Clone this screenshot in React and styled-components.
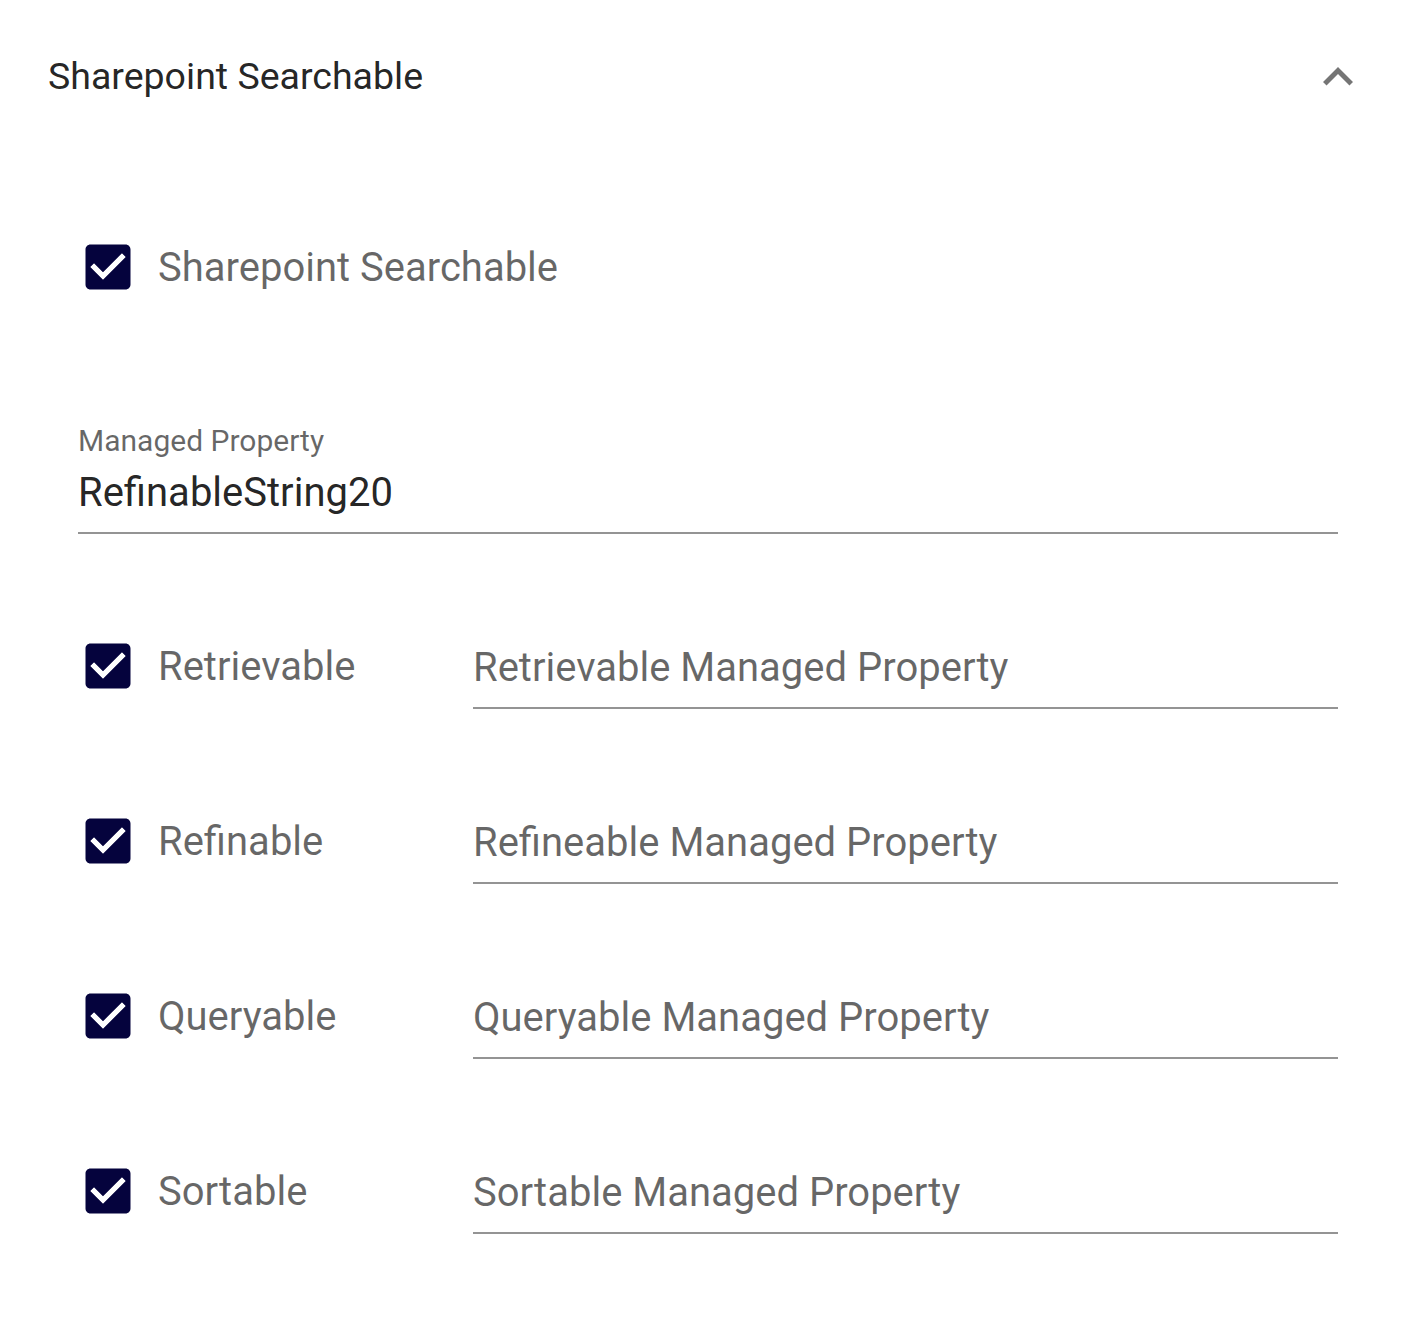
import React from "react";
import styled, { createGlobalStyle } from "styled-components";

const GlobalStyle = createGlobalStyle`
  html, body { margin: 0; padding: 0; background: #ffffff; }
  body { font-family: Roboto, "Noto Sans", "Liberation Sans", sans-serif; }
`;

const Page = styled.div`
  width: 1415px;
  min-height: 1319px;
  box-sizing: border-box;
  background: #fff;
`;

const Header = styled.div`
  height: 152px;
  display: flex;
  align-items: center;
  justify-content: space-between;
  padding: 0 47px 0 48px;
  box-sizing: border-box;
`;

const Title = styled.div`
  font-size: 37.5px;
  line-height: 44px;
  color: rgba(0, 0, 0, 0.87);
  font-weight: 400;
`;

const ChevronButton = styled.div`
  width: 60px;
  height: 60px;
  margin-top: 2px;
  display: flex;
  align-items: center;
  justify-content: center;
  color: rgba(0, 0, 0, 0.54);
  svg { display: block; }
`;

const Details = styled.div`
  display: flex;
  flex-direction: column;
  padding: 84.5px 77px 85px 77.5px;
`;

const CheckGroup = styled.label`
  display: flex;
  align-items: center;
  height: 60px;
  gap: 20.5px;
  cursor: pointer;
`;

const CheckIcon = styled.svg`
  width: 60px;
  height: 60px;
  flex: none;
  color: #05033d;
`;

const CheckLabel = styled.span`
  font-size: 40px;
  line-height: 47px;
  margin-top: 1.5px;
  color: rgba(0, 0, 0, 0.6);
  white-space: nowrap;
`;

const Field = styled.div`
  display: flex;
  flex-direction: column;
  margin-top: ${(p) => p.$top || 0}px;
  padding-bottom: 16px;
  border-bottom: 2px solid #949494;
`;

const FieldLabel = styled.div`
  font-size: 30px;
  line-height: 35px;
  color: rgba(0, 0, 0, 0.6);
  margin-bottom: 10.6px;
`;

const FieldValue = styled.div`
  font-size: 40px;
  line-height: 47px;
  color: ${(p) => (p.$placeholder ? "rgba(0, 0, 0, 0.6)" : "rgba(0, 0, 0, 0.87)")};
  white-space: nowrap;
`;

const ManagedField = styled(Field)`
  margin-top: 126.5px;
  margin-bottom: 102.5px;
  margin-left: 0.5px;
`;

const PropRows = styled.div`
  display: flex;
  flex-direction: column;
  gap: 102.5px;
`;

const PropRow = styled.div`
  display: grid;
  grid-template-columns: 395.5px 1fr;
  align-items: start;
`;

const Checkbox = ({ label }) => (
  <CheckGroup>
    <CheckIcon viewBox="0 0 24 24" aria-hidden="true">
      <path
        fill="currentColor"
        d="M19 3H5c-1.11 0-2 .9-2 2v14c0 1.1.89 2 2 2h14c1.11 0 2-.9 2-2V5c0-1.1-.89-2-2-2zm-9 14l-5-5 1.41-1.41L10 14.17l7.59-7.59L19 8l-9 9z"
      />
      <path fill="#ffffff" d="M10 17l-5-5 1.41-1.41L10 14.17l7.59-7.59L19 8l-9 9z" />
    </CheckIcon>
    <CheckLabel>{label}</CheckLabel>
  </CheckGroup>
);

const rows = [
  ["Retrievable", "Retrievable Managed Property"],
  ["Refinable", "Refineable Managed Property"],
  ["Queryable", "Queryable Managed Property"],
  ["Sortable", "Sortable Managed Property"],
];

export default function App() {
  return (
    <Page>
      <GlobalStyle />
      <Header>
        <Title>Sharepoint Searchable</Title>
        <ChevronButton>
          <svg width="60" height="60" viewBox="0 0 24 24" aria-hidden="true">
            <path fill="currentColor" d="M12 8l-6 6 1.41 1.41L12 10.83l4.59 4.58L18 14z" />
          </svg>
        </ChevronButton>
      </Header>
      <Details>
        <Checkbox label="Sharepoint Searchable" />
        <ManagedField>
          <FieldLabel>Managed Property</FieldLabel>
          <FieldValue>RefinableString20</FieldValue>
        </ManagedField>
        <PropRows>
          {rows.map(([label, field]) => (
            <PropRow key={label}>
              <Checkbox label={label} />
              <Field $top={7.5}>
                <FieldValue $placeholder>{field}</FieldValue>
              </Field>
            </PropRow>
          ))}
        </PropRows>
      </Details>
    </Page>
  );
}
